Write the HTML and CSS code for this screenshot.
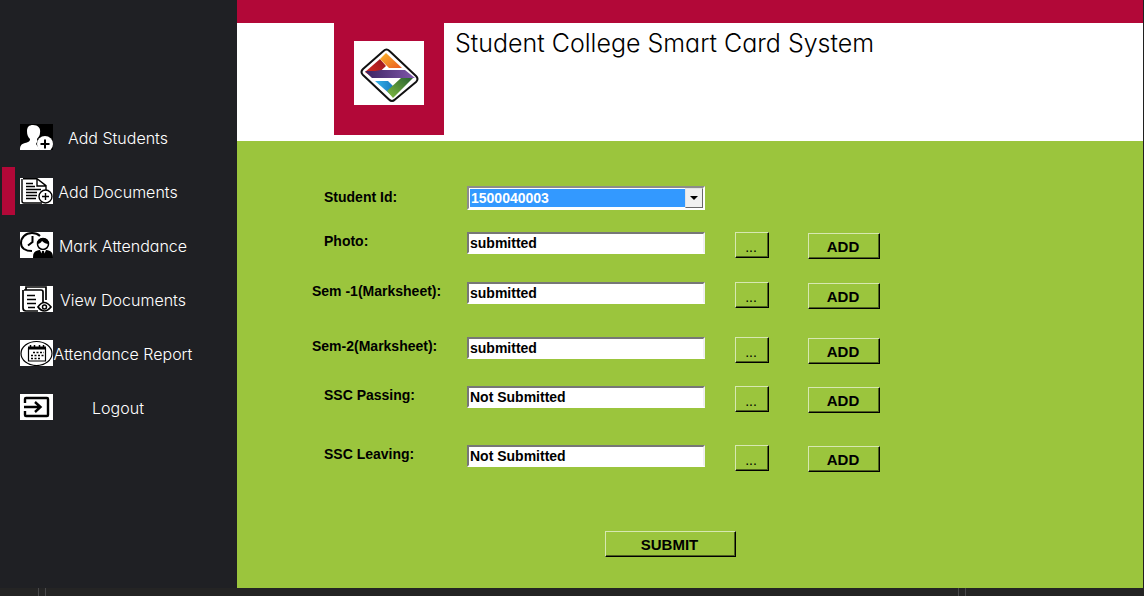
FILE: index.html
```html
<!DOCTYPE html>
<html lang="en">
<head>
<meta charset="utf-8">
<title>Student College Smart Card System</title>
<link rel="stylesheet" href="styles.css">
</head>
<body>
<div class="window">
  <nav class="sidebar" aria-label="Main">
    <a class="item" href="#students">
      <svg class="icon" viewBox="0 0 33 26"><path fill="#000" d="M0 0h33v26H0z"/><path fill="#fff" d="M13 1c5 0 8 3 7 8 0 3-2 4-3 6 0 3 3 3 5 4v7H0c0-4 1-6 5-7 3-1 5-1 5-4-2-2-3-4-3-8 0-4 2-6 6-6z"/><path fill="#000" d="M19 14h14v12H20l-4-6z"/><circle cx="25" cy="20" r="8" fill="#fff"/><path stroke="#000" stroke-width="2" d="M25 15.500v9M20.500 20h9"/></svg>
      <span class="label">Add Students</span>
    </a>
    <a class="item active" href="#documents" aria-current="page">
      <svg class="icon" viewBox="0 0 33 26" fill="none" stroke="#000"><path fill="#fff" stroke="none" d="M0 0h33v26H0z"/><path stroke-width="1.400" d="M3 .7h14l9 7v6M17 1v7h9M2 1v22q0 2 2 2h18"/><path stroke-width="1.300" d="M6 5.500h7M6 8.500h9M6 11.500h15M6 14.500h11M6 17.500h11M6 20.500h10"/><circle cx="25.500" cy="18.500" r="6.500" fill="#fff" stroke-width="1.400"/><path stroke-width="1.400" d="M25.500 15v7M22 18.500h7"/></svg>
      <span class="label">Add Documents</span>
    </a>
    <a class="item" href="#attendance">
      <svg class="icon" viewBox="0 0 33 26" fill="none" stroke="#000"><path fill="#fff" stroke="none" d="M0 0h33v26H0z"/><path stroke-width="2" d="M20 4C16 0 8 0 4 4S0 14 4 17q3 2 8 2M12.500 4v6L8 13.500"/><circle cx="23" cy="12" r="5.500" fill="#fff" stroke-width="1.500"/><path fill="#000" stroke="none" d="M17 12c0-8 12-8 12 0-3 0-5-1-7-3-1 2-3 3-5 3zM13 26c0-5 1-7 7-8l3 7 3-7c6 1 7 3 7 8zM22 19h2l1 5-2 2-2-2z"/></svg>
      <span class="label wide">Mark Attendance</span>
    </a>
    <a class="item" href="#view">
      <svg class="icon" viewBox="0 0 33 26" fill="none" stroke="#000"><path fill="#fff" stroke="none" d="M0 0h33v26H0z"/><path stroke-width="1.700" d="M6 4V1h20v13M4 4h17q2 0 2 2v10M3 4v18q0 3 3 3h12"/><path stroke-width="1.600" d="M7 9.500h8M7 13.500h9M7 17.500h9M8 21.500h7"/><path fill="#fff" stroke-width="1.700" d="M18 21q6-9 13 0-7 8-13 0z"/><circle cx="24.500" cy="21" r="2" stroke-width="1.500"/></svg>
      <span class="label wide">View Documents</span>
    </a>
    <a class="item" href="#report">
      <svg class="icon" viewBox="0 0 33 26" fill="none" stroke="#000"><path fill="#fff" stroke="none" d="M0 0h33v26H0z"/><ellipse cx="16.500" cy="13.500" rx="15.500" ry="12" stroke-width="1.200"/><path stroke-width="1.200" d="M8.500 8v13h17V8"/><path stroke-width="3" d="M8 8h18"/><path stroke-width="1.500" d="M10.500 5v4M14.500 5v3M19.500 5v3M23.500 5v4"/><path stroke-width="1.500" stroke-dasharray="2 1.500" d="M13 12.500h11M11 15.500h13M11 18.500h10"/></svg>
      <span class="label wide">Attendance Report</span>
    </a>
    <a class="item" href="#logout">
      <svg class="icon" viewBox="0 0 33 26" fill="none" stroke="#000"><path fill="#fff" stroke="none" d="M0 0h33v26H0z"/><path stroke-width="2.400" d="M5 9V5q0-1 1-1h21q1 0 1 1v16q0 1-1 1H6q-1 0-1-1v-4M4 13h16M15 8l5.500 5-5.500 5"/></svg>
      <span class="label">Logout</span>
    </a>
  </nav>
  <div class="content">
    <header class="header">
      <div class="badge">
        <svg class="logo" viewBox="0 0 70 64">
          <defs>
            <linearGradient id="red" x1="0" y1="1" x2="1" y2="0"><stop offset="0" stop-color="#e03022"/><stop offset="1" stop-color="#97131d"/></linearGradient>
            <linearGradient id="orange" x1="0" y1="0" x2="1" y2="1"><stop offset="0" stop-color="#fbb62a"/><stop offset="1" stop-color="#ea5b22"/></linearGradient>
            <linearGradient id="purple"><stop offset="0" stop-color="#3b2463"/><stop offset="1" stop-color="#8057a9"/></linearGradient>
            <linearGradient id="green" x1="1" y1="0" x2="0" y2="1"><stop offset="0" stop-color="#27602f"/><stop offset="1" stop-color="#82bd42"/></linearGradient>
            <linearGradient id="blue"><stop offset="0" stop-color="#35b5ec"/><stop offset="1" stop-color="#1671b8"/></linearGradient>
          </defs>
          <path fill="#fff" d="M0 0h70v64H0z"/>
          <path fill="#fff" stroke="#111" stroke-width="2" stroke-linejoin="round" d="M29.500 10q3-3 6 0L62 35q3 3 0 6L41 58.500q-3 3-6 0L9 34q-3-3 0-6z"/>
          <path fill="url(#red)" d="M11 31l15-13 6 7-13 12z"/>
          <path fill="url(#orange)" d="M26 18l6-6 16 15H35z"/>
          <path fill="url(#purple)" d="M11 30l7 7h43L51 29H27l-6 1z"/>
          <path fill="url(#blue)" d="M21 40h13l8 8-5 6z"/>
          <path fill="url(#green)" d="M33 50l14-13h12L39 57z"/>
        </svg>
      </div>
      <h1 class="title">Student College Smart Card System</h1>
    </header>
    <form class="form">
      <label class="name" for="sid">Student Id:</label>
      <div class="combo">
        <select id="sid"><option>1500040003</option></select>
        <span class="arrow" aria-hidden="true"></span>
      </div>

      <label class="name" for="photo">Photo:</label>
      <input class="field" id="photo" value="submitted">
      <button class="button browse" type="button" aria-label="Browse photo">...</button>
      <button class="button add" type="button">ADD</button>

      <label class="name long" for="sem1">Sem -1(Marksheet):</label>
      <input class="field" id="sem1" value="submitted">
      <button class="button browse" type="button" aria-label="Browse semester 1">...</button>
      <button class="button add" type="button">ADD</button>

      <label class="name long" for="sem2">Sem-2(Marksheet):</label>
      <input class="field" id="sem2" value="submitted">
      <button class="button browse" type="button" aria-label="Browse semester 2">...</button>
      <button class="button add" type="button">ADD</button>

      <label class="name" for="passing">SSC Passing:</label>
      <input class="field" id="passing" value="Not Submitted">
      <button class="button browse" type="button" aria-label="Browse passing certificate">...</button>
      <button class="button add" type="button">ADD</button>

      <label class="name" for="leaving">SSC Leaving:</label>
      <input class="field" id="leaving" value="Not Submitted">
      <button class="button browse" type="button" aria-label="Browse leaving certificate">...</button>
      <button class="button add" type="button">ADD</button>

      <button class="button submit" type="submit">SUBMIT</button>
    </form>
  </div>
</div>
<footer class="status"><span class="grip"></span><span class="grip"></span></footer>
</body>
</html>
```
FILE: styles.css
```css
* { box-sizing: border-box; }

body {
  margin: 0;
  min-height: 100vh;
  display: flex;
  flex-direction: column;
  background: #242424;
  font-family: "Liberation Sans", Arial, sans-serif;
}

.window {
  flex: 1;
  display: flex;
  border-right: 1px solid #202020;
}

.sidebar {
  flex: 0 0 237px;
  display: flex;
  flex-direction: column;
  gap: 6px;
  padding: 113px 0 0 2px;
  background: #1f2024;
}

.item {
  display: flex;
  align-items: center;
  height: 48px;
  border-left: 13px solid transparent;
  padding-left: 5px;
  color: #fff;
  font: 300 16px/20px "Century Gothic", Inter, sans-serif;
  font-feature-settings: "cv11";
  text-decoration: none;
}

.item.active { border-left-color: #b20838; }

.icon {
  flex: none;
  width: 33px;
  height: 26px;
}

.label {
  flex: 0 0 130px;
  display: flex;
  justify-content: center;
  padding-top: 2px;
  white-space: nowrap;
}

.label.wide { flex-basis: 140px; }

.content {
  flex: 1;
  display: flex;
  flex-direction: column;
  background: #9bc53d;
}

.header {
  display: flex;
  align-items: flex-start;
  gap: 11px;
  border-top: 23px solid #b20838;
  padding: 0 0 6px 97px;
  background: #fff;
}

.badge {
  padding: 18px 20px 30px;
  background: #b20838;
}

.logo {
  display: block;
  width: 70px;
  height: 64px;
}

.title {
  margin: 4px 0 0;
  color: #000;
  font: 300 25px/32px "Century Gothic", Inter, sans-serif;
  font-feature-settings: "cv11";
}

.form {
  display: grid;
  grid-template-columns: 143px 238px 64px 111px;
  grid-template-rows: 46px 50px 55px 49px 59px auto;
  align-items: start;
  padding: 45px 0 31px 87px;
  font-weight: bold;
  font-size: 14px;
}

.name {
  grid-column: 1;
  line-height: 18px;
}

.name:first-child { line-height: 22px; }

.name.long {
  margin-left: -12px;
  white-space: nowrap;
}

.combo {
  position: relative;
  height: 24px;
  border: 2px solid;
  border-color: #8c8c8c #fff #fff #8c8c8c;
  background: #fff;
}

.combo select {
  appearance: none;
  display: block;
  width: 100%;
  height: 20px;
  margin: 0;
  border: 1px solid #fff;
  border-radius: 0;
  padding: 0 1px;
  background: #3399ff;
  color: #fff;
  font: inherit;
}

.arrow {
  position: absolute;
  top: 0;
  right: 0;
  width: 18px;
  height: 20px;
  display: grid;
  place-items: center;
  border: 1px solid;
  border-color: #e3e3e3 #696969 #696969 #e3e3e3;
  background: #f0f0f0;
  pointer-events: none;
}

.arrow::before {
  content: "";
  border: 4px solid transparent;
  border-top-color: #000;
  border-bottom: 0;
}

.field {
  width: 100%;
  height: 22px;
  margin: 0;
  border: 2px solid;
  border-color: #777 #f0f0f0 #fff #777;
  border-radius: 0;
  padding: 0 1px;
  background: #fff;
  color: #000;
  font: inherit;
}

.button {
  height: 26px;
  margin: 0;
  border: 1px solid;
  border-color: #d7e8b1 #000 #000 #d7e8b1;
  border-radius: 0;
  box-shadow: inset -1px -1px #4d621e;
  padding: 0 2px 0 0;
  background: #9bc53d;
  color: #000;
  font: inherit;
  font-size: 15px;
}

.browse {
  justify-self: end;
  width: 34px;
  padding: 4px 2px 0 0;
  font-size: 14px;
  font-weight: normal;
}

.add {
  justify-self: end;
  width: 72px;
  margin-top: 1px;
}

.submit {
  grid-column: 2;
  justify-self: end;
  width: 131px;
  margin: 87px -31px 0 0;
}

.submit { margin-top: 59px; }

.status {
  display: flex;
  justify-content: space-between;
  height: 8px;
  padding: 0 178px 0 38px;
  background: #242424;
}

.grip {
  width: 8px;
  border: 1px solid #48484a;
  border-width: 0 1px;
}
```
